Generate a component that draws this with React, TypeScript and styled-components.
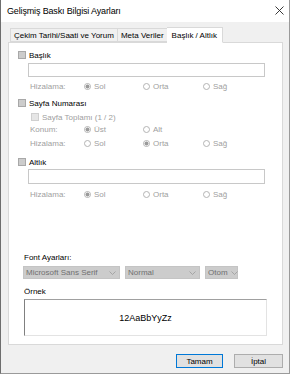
import styled, { createGlobalStyle } from 'styled-components'

const GlobalStyle = createGlobalStyle`
  html, body {
    margin: 0;
    padding: 0;
    background: #ffffff;
  }
  body {
    font-family: "Liberation Sans", Arial, sans-serif;
    font-size: 8px;
    color: #000;
  }
  * {
    box-sizing: border-box;
  }
`

const Window = styled.div`
  width: 290px;
  height: 374px;
  display: flex;
  flex-direction: column;
  background: #f0f0f0;
  border: 1px solid #9a9a9a;
  border-left-color: #6e6e6e;
  border-top: none;
`

const TitleBar = styled.div`
  height: 22px;
  flex: none;
  background: #ffffff;
  display: flex;
  align-items: center;
  justify-content: space-between;
  padding: 0 5px 1px 6px;
  font-size: 9px;
  letter-spacing: -0.15px;
`

const Body = styled.div`
  flex: 1;
  display: flex;
  flex-direction: column;
  padding: 4px 6px 0 7px;
`

const TabStrip = styled.div`
  display: flex;
  align-items: flex-end;
  height: 16px;
  padding-left: 2px;
  position: relative;
  z-index: 1;
`

const Tab = styled.div<{ $active?: boolean }>`
  height: ${p => (p.$active ? 16 : 14)}px;
  padding: 0 ${p => (p.$active ? 5 : 3)}px;
  margin-left: ${p => (p.$active ? -1 : 0)}px;
  margin-right: ${p => (p.$active ? -1 : 0)}px;
  display: flex;
  align-items: center;
  white-space: nowrap;
  background: ${p => (p.$active ? '#ffffff' : '#f0f0f0')};
  border: 1px solid #d9d9d9;
  border-bottom: ${p => (p.$active ? '1px solid #ffffff' : '1px solid #d9d9d9')};
  margin-bottom: ${p => (p.$active ? -1 : 0)}px;
  & + & {
    border-left: none;
  }
`

const Panel = styled.div`
  height: 303px;
  flex: none;
  background: #ffffff;
  border: 1px solid #d9d9d9;
  display: flex;
  flex-direction: column;
  padding: 6px 0 0 9px;
`

const CheckRow = styled.label<{ $mt?: number; $indent?: number; $disabled?: boolean }>`
  height: 12px;
  flex: none;
  display: flex;
  align-items: center;
  gap: 3px;
  margin-top: ${p => p.$mt ?? 0}px;
  margin-left: ${p => p.$indent ?? 0}px;
  color: ${p => (p.$disabled ? '#a0a0a0' : '#000')};
`

const Box = styled.span<{ $light?: boolean }>`
  width: 8px;
  height: 8px;
  flex: none;
  background: ${p => (p.$light ? '#e6e6e6' : '#cccccc')};
  border: 1px solid ${p => (p.$light ? '#d0d0d0' : '#a8a8a8')};
`

const TextField = styled.div<{ $mt?: number; $h?: number }>`
  flex: none;
  margin-top: ${p => p.$mt ?? 0}px;
  margin-left: 10px;
  width: 237px;
  height: ${p => p.$h ?? 14}px;
  border: 1px solid #c8c8c8;
  background: #fff;
`

const OptionRow = styled.div<{ $mt?: number }>`
  height: 12px;
  flex: none;
  margin-top: ${p => p.$mt ?? 0}px;
  margin-left: 12px;
  display: grid;
  grid-template-columns: 54px 59px 60px 1fr;
  align-items: center;
  color: #a0a0a0;
`

const Radio = styled.span`
  display: flex;
  align-items: center;
  gap: 3px;
`

const Dot = styled.span<{ $on?: boolean }>`
  width: 7px;
  height: 7px;
  flex: none;
  border-radius: 50%;
  border: 1px solid #b4b4b4;
  background: ${p => (p.$on ? 'radial-gradient(circle, #9a9a9a 0 1.8px, #ffffff 2.2px)' : '#ffffff')};
`

const SectionLabel = styled.div<{ $mt: number }>`
  height: 12px;
  flex: none;
  display: flex;
  align-items: center;
  margin-top: ${p => p.$mt}px;
  margin-left: 6px;
`

const SelectRow = styled.div`
  display: flex;
  flex: none;
  gap: 5px;
  margin-top: 3px;
  margin-left: 5px;
`

const Select = styled.div<{ $w: number }>`
  width: ${p => p.$w}px;
  height: 13px;
  flex: none;
  white-space: nowrap;
  background: #cccccc;
  border: 1px solid #c4c4c4;
  color: #707070;
  display: flex;
  align-items: center;
  justify-content: space-between;
  gap: 3px;
  padding: 0 3px 0 2px;
`

const Sample = styled.div`
  flex: none;
  margin-top: 2px;
  margin-left: 6px;
  width: 243px;
  height: 37px;
  background: #fff;
  border: 1px solid #e3e3e3;
  border-top-color: #a0a0a0;
  border-left-color: #808080;
  display: flex;
  align-items: center;
  justify-content: center;
  font-size: 9px;
  color: #000;
`

const Footer = styled.div`
  display: flex;
  justify-content: flex-end;
  gap: 11px;
  padding: 9px 0 0 0;
`

const Button = styled.div<{ $primary?: boolean; $w: number }>`
  width: ${p => p.$w}px;
  height: 14px;
  background: #e1e1e1;
  border: 1px solid ${p => (p.$primary ? '#0078d7' : '#adadad')};
  display: flex;
  align-items: center;
  justify-content: center;
`

const Chevron = () => (
  <svg width="7" height="4" viewBox="0 0 7 4" style={{ flex: 'none' }}>
    <path d="M0.5 0.5 L3.5 3.5 L6.5 0.5" fill="none" stroke="#9a9a9a" strokeWidth="0.8" />
  </svg>
)

const CloseIcon = () => (
  <svg width="9" height="9" viewBox="0 0 9 9">
    <path d="M0.5 0.5 L8.5 8.5 M8.5 0.5 L0.5 8.5" stroke="#222" strokeWidth="0.9" />
  </svg>
)

const AlignOptions = ({ label, options, selected, mt }: { label: string; options: string[]; selected: number; mt: number }) => (
  <OptionRow $mt={mt}>
    <span>{label}</span>
    {options.map((o, i) => (
      <Radio key={o}>
        <Dot $on={i === selected} />
        {o}
      </Radio>
    ))}
  </OptionRow>
)

export default function App() {
  return (
    <>
      <GlobalStyle />
      <Window>
        <TitleBar>
          <span>Gelişmiş Baskı Bilgisi Ayarları</span>
          <CloseIcon />
        </TitleBar>
        <Body>
          <TabStrip>
            <Tab>Çekim Tarihi/Saati ve Yorum</Tab>
            <Tab>Meta Veriler</Tab>
            <Tab $active>Başlık / Altlık</Tab>
          </TabStrip>
          <Panel>
            <CheckRow><Box />Başlık</CheckRow>
            <TextField $mt={2} />
            <AlignOptions label="Hizalama:" options={['Sol', 'Orta', 'Sağ']} selected={0} mt={3} />

            <CheckRow $mt={5}><Box />Sayfa Numarası</CheckRow>
            <CheckRow $mt={2} $indent={13} $disabled><Box $light />Sayfa Toplamı (1 / 2)</CheckRow>
            <AlignOptions label="Konum:" options={['Üst', 'Alt']} selected={0} mt={0} />
            <AlignOptions label="Hizalama:" options={['Sol', 'Orta', 'Sağ']} selected={1} mt={2} />

            <CheckRow $mt={7}><Box />Altlık</CheckRow>
            <TextField $mt={1} $h={15} />
            <AlignOptions label="Hizalama:" options={['Sol', 'Orta', 'Sağ']} selected={0} mt={4} />

            <SectionLabel $mt={51}>Font Ayarları:</SectionLabel>
            <SelectRow>
              <Select $w={97}>Microsoft Sans Serif<Chevron /></Select>
              <Select $w={75}>Normal<Chevron /></Select>
              <Select $w={33}>Otom<Chevron /></Select>
            </SelectRow>
            <SectionLabel $mt={6}>Örnek</SectionLabel>
            <Sample>12AaBbYyZz</Sample>
          </Panel>
          <Footer>
            <Button $primary $w={47}>Tamam</Button>
            <Button $w={49}>İptal</Button>
          </Footer>
        </Body>
      </Window>
    </>
  )
}
